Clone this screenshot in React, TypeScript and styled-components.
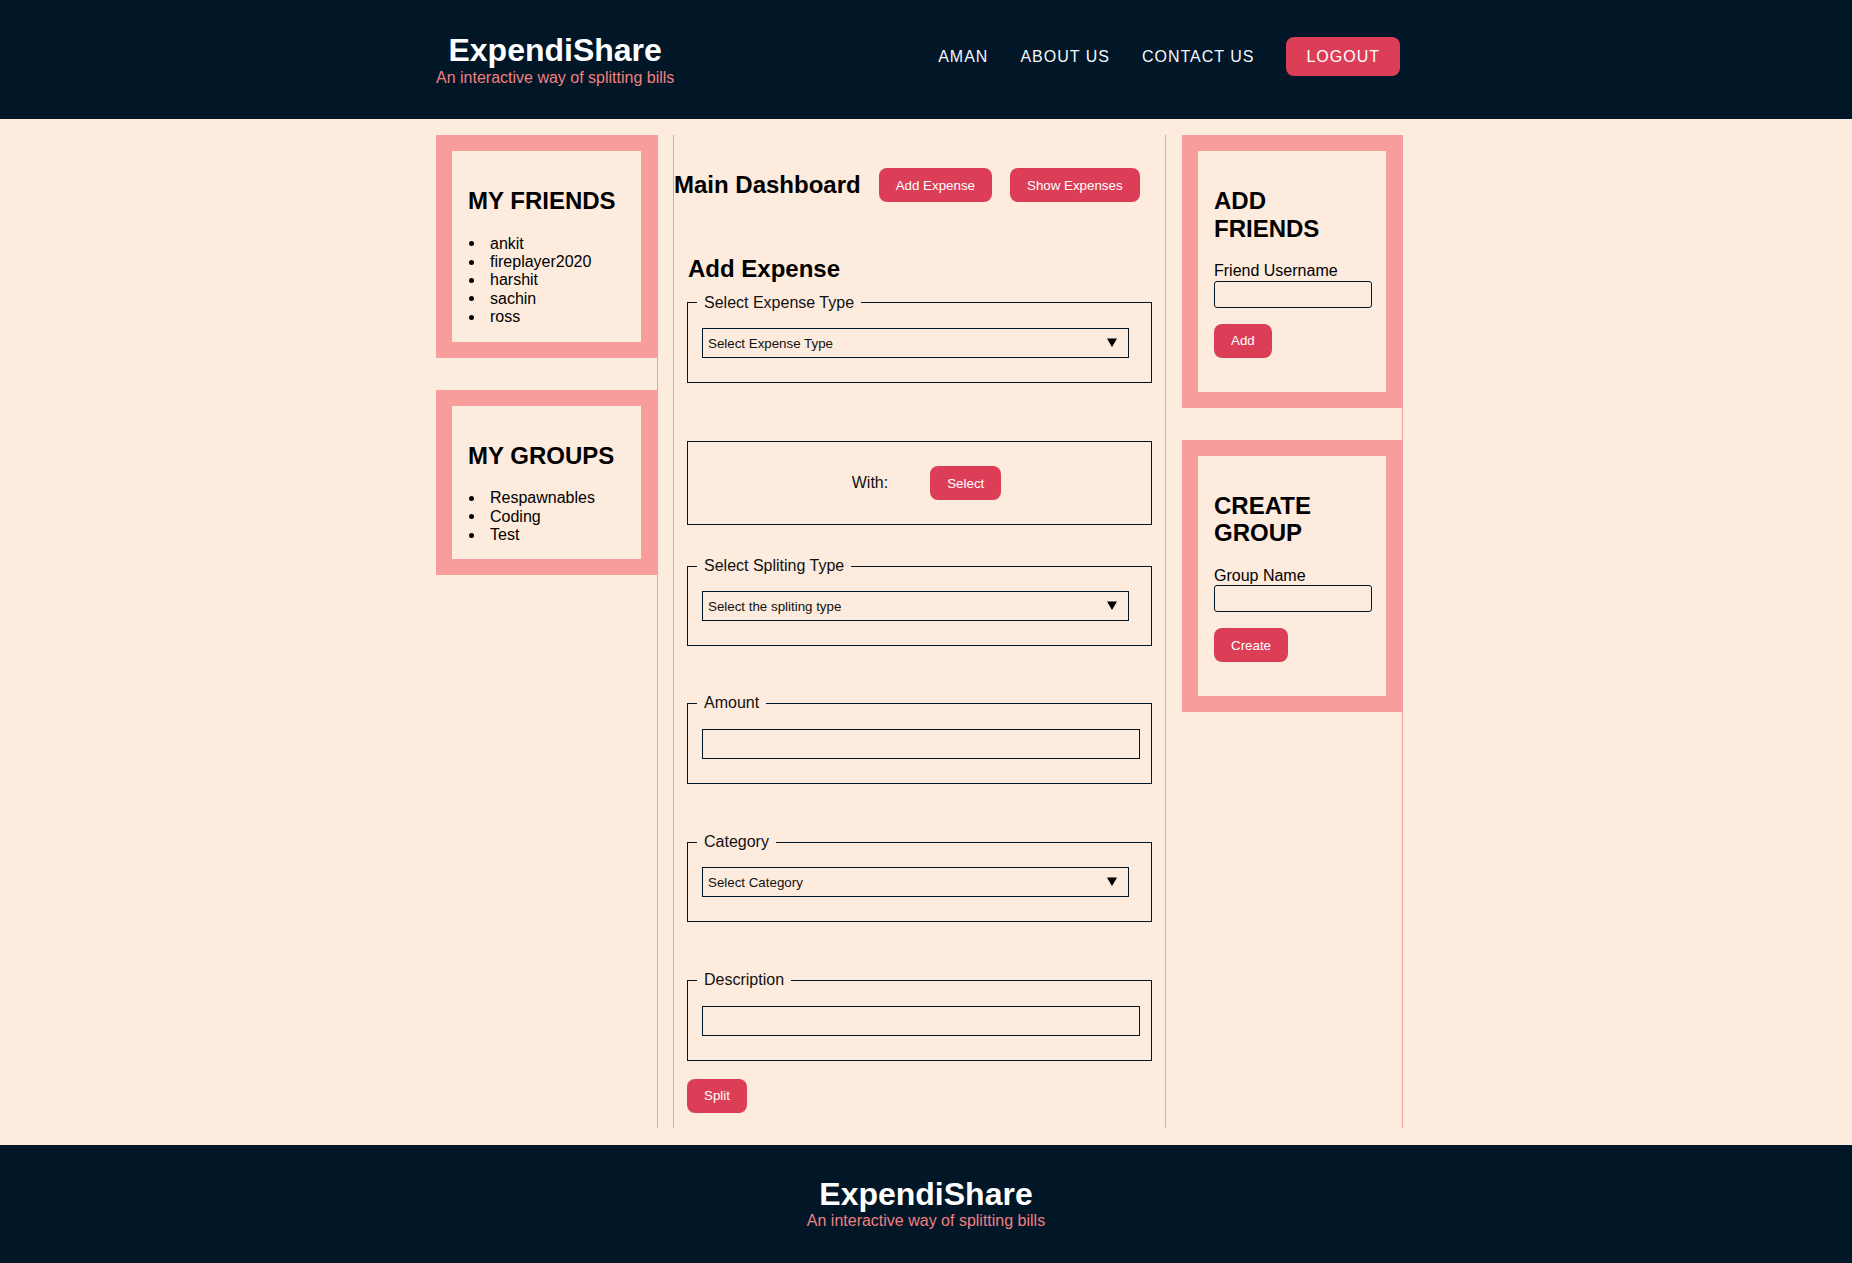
import React from "react";
import styled, { createGlobalStyle } from "styled-components";

const NAVY = "#011627";
const PEACH = "#fdebdd";
const PINK = "#f89d9b";
const RED = "#dc3e57";
const CORAL = "#f08080";
const FONT = `"Liberation Sans", Arial, Helvetica, sans-serif`;

const GlobalStyle = createGlobalStyle`
  html, body {
    margin: 0;
    padding: 0;
    background: ${NAVY};
    font-family: ${FONT};
  }
  * { box-sizing: border-box; }
`;

const Page = styled.div`
  display: flex;
  flex-direction: column;
  min-height: 100vh;
`;

/* ---------- Header ---------- */
const Header = styled.header`
  background: ${NAVY};
  height: 119px;
`;

const HeaderInner = styled.div`
  width: 980px;
  height: 100%;
  margin: 0 auto;
  padding-right: 16px;
  display: flex;
  align-items: center;
  justify-content: space-between;
`;

const Brand = styled.div`
  display: flex;
  flex-direction: column;
  align-items: center;
  text-align: center;
`;

const BrandTitle = styled.div<{ $lh: string }>`
  color: #ffffff;
  font-size: 32px;
  font-weight: 700;
  line-height: ${(p) => p.$lh};
`;

const BrandTag = styled.div`
  color: ${CORAL};
  font-size: 16px;
  line-height: 18.4px;
`;

const Nav = styled.nav`
  display: flex;
  align-items: center;
  gap: 32px;
  margin-bottom: 6px;
`;

const NavLink = styled.a`
  color: #f4f8ff;
  font-size: 16px;
  letter-spacing: 1px;
  text-decoration: none;
  cursor: pointer;
`;

const LogoutButton = styled.button`
  height: 39px;
  padding: 0 20px;
  border: none;
  border-radius: 8px;
  background: ${RED};
  color: #ffffff;
  font-family: ${FONT};
  font-size: 16px;
  letter-spacing: 1px;
  cursor: pointer;
`;

/* ---------- Main ---------- */
const Main = styled.main`
  background: ${PEACH};
  padding: 16px 0 17px;
  flex: 1;
`;

const Columns = styled.div`
  width: 980px;
  margin: 0 auto;
  display: flex;
  align-items: stretch;
`;

const SideColumn = styled.aside<{ $width: number; $ml: number }>`
  width: ${(p) => p.$width}px;
  margin-left: ${(p) => p.$ml}px;
  border-right: 1px solid ${PINK};
  display: flex;
  flex-direction: column;
  gap: 32px;
`;

const Card = styled.section<{ $pb: number }>`
  border: 16px solid ${PINK};
  background: ${PEACH};
  padding: 36px 16px ${(p) => p.$pb}px;
  color: #000;
`;

const CardTitle = styled.h2`
  margin: 0 0 20px;
  font-size: 24px;
  font-weight: 700;
  line-height: 27.6px;
`;

const List = styled.ul`
  margin: 0;
  padding-left: 22px;
  list-style: none;
  font-size: 16px;
  line-height: 18.4px;
`;

const ListItem = styled.li`
  position: relative;

  &::before {
    content: "";
    position: absolute;
    left: -21px;
    top: 6.5px;
    width: 5px;
    height: 5px;
    border-radius: 50%;
    background: #000;
  }
`;

const FieldLabel = styled.label`
  display: block;
  font-size: 16px;
  line-height: 18.4px;
  color: #000;
`;

const SmallInput = styled.input`
  display: block;
  width: 158px;
  height: 27px;
  border: 1px solid ${NAVY};
  border-radius: 3px;
  background: transparent;
  font-family: ${FONT};
  font-size: 13.33px;
  padding: 2px 4px;
`;

const PillButton = styled.button<{ $mt?: number }>`
  height: 34px;
  padding: 0 17px;
  margin-top: ${(p) => p.$mt ?? 0}px;
  border: none;
  border-radius: 8px;
  background: ${RED};
  color: #ffffff;
  font-family: ${FONT};
  font-size: 13.33px;
  cursor: pointer;
  align-self: flex-start;
  flex-shrink: 0;
`;

const CenterColumn = styled.div`
  width: 493px;
  margin-left: 15px;
  border-left: 1px solid ${PINK};
  border-right: 1px solid ${PINK};
  padding-bottom: 15px;
  display: flex;
  flex-direction: column;
`;

const DashRow = styled.div`
  display: flex;
  align-items: center;
  gap: 18px;
  margin-top: 33px;
  height: 34px;
`;

const DashTitle = styled.h2`
  margin: 0;
  font-size: 24px;
  font-weight: 700;
  line-height: 27.6px;
  color: #000;
`;

const Form = styled.form`
  display: flex;
  flex-direction: column;
  padding: 0 13px;
`;

const FormTitle = styled.h3`
  margin: 53px 0 0 1px;
  font-size: 24px;
  font-weight: 700;
  line-height: 27.6px;
  color: #000;
`;

const FieldSet = styled.fieldset<{ $mt: number }>`
  margin: ${(p) => p.$mt}px 0 0;
  border: 1px solid ${NAVY};
  padding: 16px 12px 24px 14px;
  min-width: 0;
`;

const Legend = styled.legend`
  margin-left: -5px;
  padding: 0 7px;
  font-size: 16px;
  line-height: 18.4px;
  color: #111;
`;

const SelectWrap = styled.div`
  position: relative;
  width: 427px;
  height: 30px;
`;

const Select = styled.select`
  display: block;
  width: 100%;
  height: 100%;
  appearance: none;
  -webkit-appearance: none;
  border: 1px solid ${NAVY};
  border-radius: 0;
  background: transparent;
  color: #111;
  font-family: ${FONT};
  font-size: 13.33px;
  padding: 0 24px 0 5px;
  outline: none;
`;

const SelectArrow = styled.svg`
  position: absolute;
  right: 12px;
  top: 50%;
  transform: translateY(-55%);
  pointer-events: none;
`;

const TextInput = styled.input`
  display: block;
  width: 438px;
  height: 30px;
  border: 1px solid ${NAVY};
  border-radius: 0;
  background: transparent;
  font-family: ${FONT};
  font-size: 13.33px;
  padding: 0 4px;
`;

const WithBox = styled.div<{ $mt: number }>`
  margin-top: ${(p) => p.$mt}px;
  border: 1px solid ${NAVY};
  padding: 24px 0 24px 14px;
  display: flex;
  align-items: center;
  justify-content: center;
  gap: 42px;
`;

const WithLabel = styled.span`
  font-size: 16px;
  color: #111;
`;

/* ---------- Footer ---------- */
const Footer = styled.footer`
  background: ${NAVY};
  min-height: 119px;
  padding-top: 31px;
  display: flex;
  justify-content: center;
`;

const friends = ["ankit", "fireplayer2020", "harshit", "sachin", "ross"];
const groups = ["Respawnables", "Coding", "Test"];

function Dropdown({ options }: { options: string[] }) {
  return (
    <SelectWrap>
      <Select defaultValue="">
        {options.map((o, i) => (
          <option key={o} value={i === 0 ? "" : o}>
            {o}
          </option>
        ))}
      </Select>
      <SelectArrow width="10" height="9" viewBox="0 0 10 9" aria-hidden="true">
        <path d="M0 0.5H10L5 9Z" fill="#000" />
      </SelectArrow>
    </SelectWrap>
  );
}

export default function App() {
  return (
    <>
      <GlobalStyle />
      <Page>
        <Header>
          <HeaderInner>
            <Brand>
              <BrandTitle $lh="38px">ExpendiShare</BrandTitle>
              <BrandTag>An interactive way of splitting bills</BrandTag>
            </Brand>
            <Nav>
              <NavLink>AMAN</NavLink>
              <NavLink>ABOUT US</NavLink>
              <NavLink>CONTACT US</NavLink>
              <LogoutButton>LOGOUT</LogoutButton>
            </Nav>
          </HeaderInner>
        </Header>

        <Main>
          <Columns>
            <SideColumn $width={222} $ml={0}>
              <Card $pb={15}>
                <CardTitle>MY FRIENDS</CardTitle>
                <List>
                  {friends.map((f) => (
                    <ListItem key={f}>{f}</ListItem>
                  ))}
                </List>
              </Card>
              <Card $pb={15}>
                <CardTitle>MY GROUPS</CardTitle>
                <List>
                  {groups.map((g) => (
                    <ListItem key={g}>{g}</ListItem>
                  ))}
                </List>
              </Card>
            </SideColumn>

            <CenterColumn>
              <DashRow>
                <DashTitle>Main Dashboard</DashTitle>
                <PillButton type="button">Add Expense</PillButton>
                <PillButton type="button">Show Expenses</PillButton>
              </DashRow>

              <Form onSubmit={(e) => e.preventDefault()}>
                <FormTitle>Add Expense</FormTitle>

                <FieldSet $mt={11}>
                  <Legend>Select Expense Type</Legend>
                  <Dropdown options={["Select Expense Type", "Friend", "Group"]} />
                </FieldSet>

                <WithBox $mt={58}>
                  <WithLabel>With:</WithLabel>
                  <PillButton type="button">Select</PillButton>
                </WithBox>

                <FieldSet $mt={32}>
                  <Legend>Select Spliting Type</Legend>
                  <Dropdown options={["Select the spliting type", "Equal", "Unequal"]} />
                </FieldSet>

                <FieldSet $mt={48}>
                  <Legend>Amount</Legend>
                  <TextInput type="text" />
                </FieldSet>

                <FieldSet $mt={49}>
                  <Legend>Category</Legend>
                  <Dropdown options={["Select Category", "Food", "Travel"]} />
                </FieldSet>

                <FieldSet $mt={49}>
                  <Legend>Description</Legend>
                  <TextInput type="text" />
                </FieldSet>

                <PillButton type="submit" $mt={18}>
                  Split
                </PillButton>
              </Form>
            </CenterColumn>

            <SideColumn $width={221} $ml={16}>
              <Card $pb={34}>
                <CardTitle>ADD FRIENDS</CardTitle>
                <FieldLabel>Friend Username</FieldLabel>
                <SmallInput type="text" />
                <PillButton type="button" $mt={16}>
                  Add
                </PillButton>
              </Card>
              <Card $pb={34}>
                <CardTitle>CREATE GROUP</CardTitle>
                <FieldLabel>Group Name</FieldLabel>
                <SmallInput type="text" />
                <PillButton type="button" $mt={16}>
                  Create
                </PillButton>
              </Card>
            </SideColumn>
          </Columns>
        </Main>

        <Footer>
          <Brand>
            <BrandTitle $lh="36.8px">ExpendiShare</BrandTitle>
            <BrandTag>An interactive way of splitting bills</BrandTag>
          </Brand>
        </Footer>
      </Page>
    </>
  );
}
